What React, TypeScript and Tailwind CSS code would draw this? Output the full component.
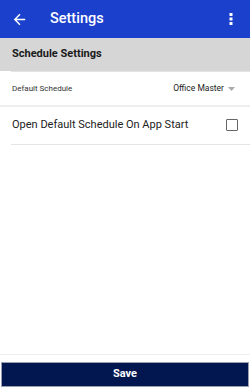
import React from "react";

export default function App() {
  return (
    <div className="w-[250px] h-[392px] bg-white flex flex-col overflow-hidden" style={{ fontFamily: "Roboto, 'Liberation Sans', sans-serif" }}>
      <div className="h-[38px] bg-[#1b40cc] flex items-center shrink-0">
        <div className="w-[38px] flex justify-center">
          <svg width="17" height="17" viewBox="0 0 24 24" fill="white">
            <path d="M20 11H7.83l5.59-5.59L12 4l-8 8 8 8 1.41-1.41L7.83 13H20v-2z" />
          </svg>
        </div>
        <div className="text-white text-[14.5px] font-medium ml-[12px] flex-1">Settings</div>
        <div className="w-[38px] flex justify-center">
          <svg width="4" height="12" viewBox="0 0 4 12" fill="white">
            <rect x="0.5" y="0" width="3" height="3" />
            <rect x="0.5" y="4.5" width="3" height="3" />
            <rect x="0.5" y="9" width="3" height="3" />
          </svg>
        </div>
      </div>
      <div className="h-[33px] bg-[#d6d6d6] flex items-center px-[12px] shrink-0">
        <span className="text-[11px] font-bold text-[#1a1a1a]">Schedule Settings</span>
      </div>
      <div className="ml-[11px] h-px bg-[#e4e4e4]" />
      <div className="h-[33px] flex items-center justify-between pl-[12px] pr-[15px]">
        <span className="text-[8px] text-[#333]">Default Schedule</span>
        <div className="flex items-center gap-[4px]">
          <span className="text-[8.5px] text-[#222]">Office Master</span>
          <svg width="7" height="4" viewBox="0 0 7 4"><path d="M0 0h7L3.5 4z" fill="#aaa" /></svg>
        </div>
      </div>
      <div className="h-[1.5px] bg-[#eeeeee]" />
      <div className="h-[37px] flex items-center justify-between pl-[12px] pr-[12px]">
        <span className="text-[11px] text-[#222]">Open Default Schedule On App Start</span>
        <div className="w-[12px] h-[12px] border-[1.5px] border-[#666] rounded-[1px]" />
      </div>
      <div className="ml-[11px] h-px bg-[#e4e4e4]" />
      <div className="flex-1" />
      <div className="h-px bg-[#eeeeee]" />
      <div className="px-[1px] pt-[7px] pb-[5px]">
        <button className="w-full h-[25px] bg-[#021650] border border-[#9aa0b0] text-white text-[11px] font-bold flex items-center justify-center">
          Save
        </button>
      </div>
    </div>
  );
}
